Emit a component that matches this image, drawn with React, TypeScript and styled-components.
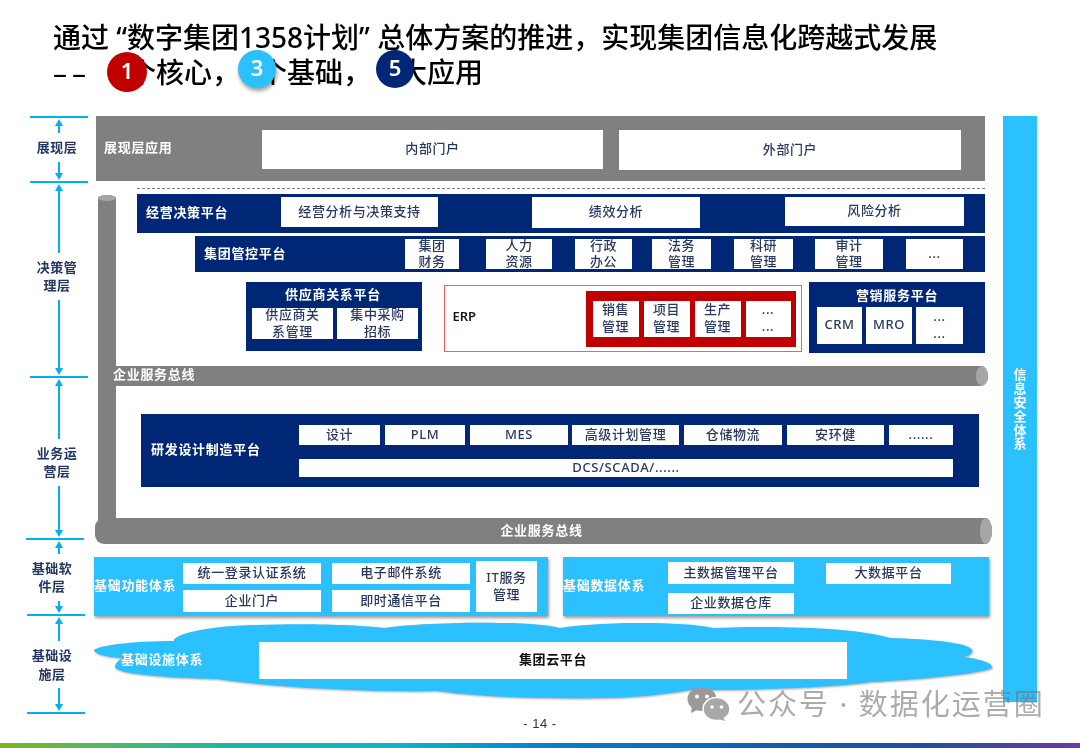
import React from "react";
import styled, { createGlobalStyle } from "styled-components";

const NAVY = "#002776";
const SKY = "#2bc0ff";
const GRAY = "#808080";
const RED = "#c00000";
const RULE = "#00b0f0";
const INK = "#28385e";

const Global = createGlobalStyle`
  html, body { margin: 0; padding: 0; background: #fff; }
  body { font-family: "Noto Sans", "Noto Sans CJK SC", sans-serif; }
`;

const Slide = styled.div`
  position: relative;
  width: 1080px;
  height: 748px;
  overflow: hidden;
  background: #fff;
  display: flex;
  flex-direction: column;
  filter: blur(0.35px);
`;

const Title = styled.h1`
  margin: 0;
  padding: 20px 0 0 53px;
  font-size: 28px;
  line-height: 35px;
  font-weight: 500;
  color: #000;
  font-family: "Noto Sans", "Noto Sans CJK SC", sans-serif;
  white-space: nowrap;
`;

const TitleLine = styled.div`
  position: relative;
  height: 35px;
  display: flex;
`;

const TitleDash = styled.span`
  flex: none;
  width: 75px;
  letter-spacing: 5px;
  font-weight: 400;
`;

const TitleGap = styled.span<{ $w: number }>`
  flex: none;
  display: inline-block;
  width: ${(p) => p.$w}px;
`;

const Badge = styled.span<{ $left: number; $top: number; $size: number; $bg: string; $shadow?: boolean }>`
  position: absolute;
  left: ${(p) => p.$left}px;
  top: ${(p) => p.$top}px;
  width: ${(p) => p.$size}px;
  height: ${(p) => p.$size}px;
  border-radius: 50%;
  background: ${(p) => p.$bg};
  color: #fff;
  font-size: 22px;
  font-weight: 600;
  line-height: ${(p) => p.$size - 3}px;
  text-align: center;
  box-shadow: ${(p) => (p.$shadow ? "1px 3px 4px rgba(0,0,0,.4)" : "none")};
`;

const Body = styled.div`
  display: flex;
  margin-top: 26px;
  height: 596px;
`;

const Ruler = styled.div`
  width: 94px;
  flex: none;
  display: flex;
  flex-direction: column;
  padding-left: 30px;
  box-sizing: border-box;
`;

const Tick = styled.div<{ $shift?: number }>`
  width: 58px;
  height: 1.6px;
  background: ${RULE};
  margin-left: ${(p) => p.$shift ?? 0}px;
  flex: none;
`;

const RulerSection = styled.div<{ $h: number }>`
  width: 58px;
  height: ${(p) => p.$h}px;
  flex: none;
  display: flex;
  flex-direction: column;
  align-items: center;
`;

const Stem = styled.div<{ $dir: "up" | "down"; $grow?: number }>`
  position: relative;
  flex: ${(p) => p.$grow ?? 1} 1 0;
  width: 1.5px;
  background: ${RULE};
  margin: ${(p) => (p.$dir === "up" ? "3px 0 0" : "0 0 3px")};
  &::after {
    content: "";
    position: absolute;
    left: -3.2px;
    ${(p) => (p.$dir === "up" ? "top: -2px;" : "bottom: -2px;")}
    border-left: 4px solid transparent;
    border-right: 4px solid transparent;
    ${(p) =>
      p.$dir === "up" ? `border-bottom: 7px solid ${RULE};` : `border-top: 7px solid ${RULE};`}
  }
`;

const RulerLabel = styled.div<{ $x?: number }>`
  flex: none;
  width: 44px;
  margin: 5px 0 5px ${(p) => p.$x ?? -4}px;
  font-size: 13px;
  letter-spacing: 0.5px;
  line-height: 18.5px;
  font-weight: 700;
  color: #22365f;
  text-align: center;
  white-space: nowrap;
`;

const Main = styled.div`
  position: relative;
  width: 898px;
  flex: none;
  display: flex;
  flex-direction: column;
`;

const Pipe = styled.div`
  position: absolute;
  left: 4px;
  top: 79px;
  width: 18px;
  height: 330px;
  background: ${GRAY};
  border-radius: 9px 9px 0 0 / 3px 3px 0 0;
  &::before {
    content: "";
    position: absolute;
    inset: 0 0 auto 0;
    height: 6px;
    border-radius: 50%;
    background: #a6a6a6;
  }
`;

const Band = styled.div<{ $bg: string; $ml: number; $mt?: number; $w: number; $h: number; $pt?: number; $pl?: number }>`
  flex: none;
  box-sizing: border-box;
  display: flex;
  align-items: flex-start;
  margin-left: ${(p) => p.$ml}px;
  margin-top: ${(p) => p.$mt ?? 0}px;
  width: ${(p) => p.$w}px;
  height: ${(p) => p.$h}px;
  padding: ${(p) => p.$pt ?? 0}px 0 0 ${(p) => p.$pl ?? 0}px;
  background: ${(p) => p.$bg};
`;

const BandLabel = styled.div<{ $w: number; $self?: number }>`
  flex: none;
  width: ${(p) => p.$w}px;
  align-self: center;
  margin-top: ${(p) => p.$self ?? 0}px;
  font-size: 13px;
  letter-spacing: 0.7px;
  font-weight: 700;
  color: #fff;
  white-space: nowrap;
`;

const Cell = styled.div<{ $w: number; $h: number; $ml?: number; $mt?: number; $strong?: boolean; $dark?: boolean }>`
  flex: none;
  box-sizing: border-box;
  display: flex;
  align-items: center;
  justify-content: center;
  width: ${(p) => p.$w}px;
  height: ${(p) => p.$h}px;
  margin-left: ${(p) => p.$ml ?? 0}px;
  margin-top: ${(p) => p.$mt ?? 0}px;
  padding-bottom: 2px;
  background: #fff;
  color: ${(p) => (p.$dark ? "#101010" : INK)};
  font-size: 13px;
  letter-spacing: 0.6px;
  line-height: 16.5px;
  font-weight: ${(p) => (p.$strong ? 700 : 500)};
  text-align: center;
  white-space: nowrap;
`;

const Dashes = styled.div`
  flex: none;
  margin: 7px 0 0 43px;
  width: 848px;
  height: 0;
  border-top: 1px dashed #777;
`;

const TriRow = styled.div`
  flex: none;
  display: flex;
  align-items: flex-start;
  margin: 10px 0 0 152px;
  height: 71px;
`;

const PlatformPanel = styled.div<{ $w: number; $h: number; $ml?: number; $head: number; $pl: number }>`
  flex: none;
  box-sizing: border-box;
  display: grid;
  grid-template-rows: ${(p) => p.$head}px auto;
  width: ${(p) => p.$w}px;
  height: ${(p) => p.$h}px;
  margin-left: ${(p) => p.$ml ?? 0}px;
  padding-left: ${(p) => p.$pl}px;
  background: ${NAVY};
`;

const PanelHead = styled.div<{ $pb: number }>`
  margin-left: -8px;
  padding-bottom: ${(p) => p.$pb}px;
  display: flex;
  align-items: center;
  justify-content: center;
  font-size: 13px;
  letter-spacing: 0.7px;
  font-weight: 700;
  color: #fff;
`;

const CellRow = styled.div<{ $gap?: number }>`
  display: flex;
  gap: ${(p) => p.$gap ?? 4}px;
`;

const ErpFrame = styled.div`
  flex: none;
  box-sizing: border-box;
  display: flex;
  align-items: center;
  width: 358px;
  height: 67px;
  margin: 3px 0 0 22px;
  padding: 0 5.5px 0 7.5px;
  border: 1.5px solid #ff5a5f;
  background: #fff;
`;

const ErpName = styled.div`
  flex: 1;
  margin-top: -5px;
  font-size: 13px;
  font-weight: 600;
  color: #101820;
`;

const ErpCore = styled.div`
  flex: none;
  box-sizing: border-box;
  display: flex;
  gap: 5px;
  width: 210px;
  height: 56px;
  padding: 10px 0 0 7px;
  background: ${RED};
`;

const Bus = styled.div<{ $ml: number; $mt: number; $w: number; $h: number; $center?: boolean; $pl?: number; $rl?: number; $pb: number }>`
  position: relative;
  z-index: 1;
  flex: none;
  box-sizing: border-box;
  display: flex;
  align-items: center;
  justify-content: ${(p) => (p.$center ? "center" : "flex-start")};
  margin: ${(p) => p.$mt}px 0 0 ${(p) => p.$ml}px;
  width: ${(p) => p.$w}px;
  height: ${(p) => p.$h}px;
  padding: 0 ${(p) => (p.$center ? 4 : 0)}px ${(p) => p.$pb}px ${(p) => p.$pl ?? 0}px;
  background: ${GRAY};
  border-radius: ${(p) => p.$rl ?? 0}px 7px 7px ${(p) => p.$rl ?? 0}px / ${(p) => p.$rl ?? 0}px 50% 50% ${(p) => p.$rl ?? 0}px;
  color: #fff;
  font-size: 13px;
  letter-spacing: 0.7px;
  font-weight: 700;
  &::after {
    content: "";
    position: absolute;
    right: 0;
    top: 0;
    bottom: 0;
    width: 12px;
    border-radius: 50%;
    background: #a6a6a6;
  }
`;

const RndColumn = styled.div`
  display: flex;
  flex-direction: column;
  gap: 14px;
`;

const FoundationRow = styled.div`
  flex: none;
  display: flex;
  margin-top: 13px;
`;

const FoundationPanel = styled.div<{ $w: number; $ml?: number }>`
  flex: none;
  box-sizing: border-box;
  display: flex;
  align-items: flex-start;
  width: ${(p) => p.$w}px;
  height: 59px;
  margin-left: ${(p) => p.$ml ?? 0}px;
  background: ${SKY};
  box-shadow: 1px 2px 3px rgba(0, 0, 0, 0.4);
`;

const CellColumn = styled.div<{ $ml?: number; $pt: number; $gap: number }>`
  display: flex;
  flex-direction: column;
  gap: ${(p) => p.$gap}px;
  margin-left: ${(p) => p.$ml ?? 0}px;
  padding-top: ${(p) => p.$pt}px;
`;

const CloudRow = styled.div`
  position: relative;
  flex: none;
  box-sizing: border-box;
  display: flex;
  align-items: flex-start;
  margin-top: 8px;
  height: 88px;
  padding-left: 27px;
`;

const CloudShape = styled.svg`
  position: absolute;
  inset: 0;
  width: 898px;
  height: 88px;
  overflow: visible;
  filter: drop-shadow(1px 1.5px 1px rgba(0, 0, 0, 0.35));
`;

const CloudLabel = styled(BandLabel)`
  position: relative;
  align-self: flex-start;
  margin-top: 25px;
`;

const CloudCell = styled(Cell)`
  position: relative;
`;

const SecurityBar = styled.div`
  flex: none;
  display: flex;
  align-items: center;
  justify-content: center;
  margin-left: 11px;
  width: 34px;
  height: 586px;
  background: ${SKY};
  color: #fff;
  font-size: 13px;
  font-weight: 700;
  letter-spacing: 0.8px;
  writing-mode: vertical-rl;
  text-orientation: upright;
`;

const PageNo = styled.div`
  margin-top: 5px;
  height: 14px;
  font-family: "Liberation Sans", sans-serif;
  font-size: 13px;
  line-height: 14px;
  letter-spacing: 0.5px;
  text-align: center;
  color: #333;
`;

const BottomBand = styled.div`
  position: absolute;
  left: 0;
  right: 0;
  bottom: 0;
  height: 5px;
  background: linear-gradient(
    90deg,
    #7fb51f 0%,
    #4fb86a 10%,
    #1cb5a6 22%,
    #0db2cc 37%,
    #0a7cc6 52%,
    #0f62a8 70%,
    #1f4f9e 85%,
    #6d3aa0 100%
  );
`;

const Watermark = styled.div`
  position: absolute;
  z-index: 3;
  left: 687px;
  top: 686px;
  display: flex;
  align-items: center;
  gap: 7px;
  white-space: nowrap;
  color: rgba(120, 120, 120, 0.62);
  font-size: 29px;
  line-height: 36px;
  letter-spacing: 2px;
`;

const WeChat = () => (
  <svg width="43" height="34" viewBox="0 0 43 34">
    <ellipse cx="15" cy="12" rx="14.5" ry="12" fill="#999" />
    <path d="M5 19 L4 26 L12 22 Z" fill="#999" />
    <circle cx="10" cy="9.5" r="2" fill="#fff" />
    <circle cx="20" cy="9.5" r="2" fill="#fff" />
    <ellipse cx="29.5" cy="22" rx="13.5" ry="11.5" fill="#a8a8a8" stroke="#fff" strokeWidth="1.5" />
    <path d="M36 30 L38 34 L31 32 Z" fill="#a8a8a8" />
    <circle cx="25" cy="20" r="1.8" fill="#fff" />
    <circle cx="34.5" cy="20" r="1.8" fill="#fff" />
  </svg>
);

const groupItems: Array<[string, string, number, number]> = [
  ["集团", "财务", 54, 0],
  ["人力", "资源", 66, 27],
  ["行政", "办公", 57, 23],
  ["法务", "管理", 59, 20],
  ["科研", "管理", 59, 23],
  ["审计", "管理", 68, 22],
];

const rndItems: Array<[string, number, number]> = [
  ["设计", 81, 0],
  ["PLM", 80, 5],
  ["MES", 98, 5],
  ["高级计划管理", 107, 4],
  ["仓储物流", 98, 5],
  ["安环健", 97, 5],
  ["......", 64, 5],
];

const TwoLine = ({ a, b }: { a: string; b: string }) => (
  <span>
    {a}
    <br />
    {b}
  </span>
);

export default function App() {
  return (
    <Slide>
      <Global />
      <Title>
        <TitleLine>通过 “数字集团1358计划” 总体方案的推进，实现集团信息化跨越式发展</TitleLine>
        <TitleLine>
          <TitleDash>––</TitleDash>
          个核心，
          <TitleGap $w={19} />
          个基础，
          <TitleGap $w={28} />
          大应用
          <Badge $left={54} $top={-3} $size={40} $bg={RED}>1</Badge>
          <Badge $left={185} $top={-5} $size={38} $bg={SKY} $shadow>3</Badge>
          <Badge $left={323} $top={-5} $size={38} $bg={NAVY}>5</Badge>
        </TitleLine>
      </Title>

      <Body>
        <Ruler>
          <Tick />
          <RulerSection $h={63.4}>
            <Stem $dir="up" $grow={0.8} />
            <RulerLabel>展现层</RulerLabel>
            <Stem $dir="down" />
          </RulerSection>
          <Tick />
          <RulerSection $h={193.4}>
            <Stem $dir="up" $grow={0.92} />
            <RulerLabel>决策管<br />理层</RulerLabel>
            <Stem $dir="down" />
          </RulerSection>
          <Tick />
          <RulerSection $h={160.4}>
            <Stem $dir="up" />
            <RulerLabel>业务运<br />营层</RulerLabel>
            <Stem $dir="down" $grow={0.85} />
          </RulerSection>
          <Tick $shift={-4} />
          <RulerSection $h={74.4}>
            <Stem $dir="up" />
            <RulerLabel $x={-14}>基础软<br />件层</RulerLabel>
            <Stem $dir="down" $grow={0.9} />
          </RulerSection>
          <Tick $shift={-3} />
          <RulerSection $h={96.4}>
            <Stem $dir="up" />
            <RulerLabel $x={-14}>基础设<br />施层</RulerLabel>
            <Stem $dir="down" $grow={0.89} />
          </RulerSection>
          <Tick $shift={-3} />
        </Ruler>

        <Main>
          <Pipe />

          <Band $bg={GRAY} $ml={2} $w={889} $h={65} $pt={14} $pl={8}>
            <BandLabel $w={158} $self={-18}>展现层应用</BandLabel>
            <Cell $w={341} $h={39}>内部门户</Cell>
            <Cell $w={342} $h={40} $ml={16}>外部门户</Cell>
          </Band>

          <Dashes />

          <Band $bg={NAVY} $ml={43} $mt={5} $w={848} $h={39} $pt={3} $pl={9}>
            <BandLabel $w={135} $self={-7}>经营决策平台</BandLabel>
            <Cell $w={157} $h={30}>经营分析与决策支持</Cell>
            <Cell $w={168} $h={31} $ml={94}>绩效分析</Cell>
            <Cell $w={179} $h={29} $ml={85}>风险分析</Cell>
          </Band>

          <Band $bg={NAVY} $ml={101} $mt={3} $w={790} $h={36} $pt={3} $pl={9}>
            <BandLabel $w={201} $self={-7}>集团管控平台</BandLabel>
            {groupItems.map(([a, b, w, ml]) => (
              <Cell key={a} $w={w} $h={30} $ml={ml}>
                <TwoLine a={a} b={b} />
              </Cell>
            ))}
            <Cell $w={57} $h={30} $ml={23}>...</Cell>
          </Band>

          <TriRow>
            <PlatformPanel $w={176} $h={69} $head={26} $pl={6}>
              <PanelHead $pb={4}>供应商关系平台</PanelHead>
              <CellRow>
                <Cell $w={81} $h={31}><TwoLine a="供应商关" b="系管理" /></Cell>
                <Cell $w={81} $h={31}><TwoLine a="集中采购" b="招标" /></Cell>
              </CellRow>
            </PlatformPanel>

            <ErpFrame>
              <ErpName>ERP</ErpName>
              <ErpCore>
                <Cell $w={46} $h={36}><TwoLine a="销售" b="管理" /></Cell>
                <Cell $w={46} $h={36}><TwoLine a="项目" b="管理" /></Cell>
                <Cell $w={46} $h={36}><TwoLine a="生产" b="管理" /></Cell>
                <Cell $w={45} $h={36}><TwoLine a="..." b="..." /></Cell>
              </ErpCore>
            </ErpFrame>

            <PlatformPanel $w={176} $h={71} $ml={7} $head={25} $pl={8}>
              <PanelHead $pb={0}>营销服务平台</PanelHead>
              <CellRow>
                <Cell $w={45} $h={37}>CRM</Cell>
                <Cell $w={46} $h={37}>MRO</Cell>
                <Cell $w={47} $h={37}><TwoLine a="..." b="..." /></Cell>
              </CellRow>
            </PlatformPanel>
          </TriRow>

          <Bus $ml={5} $mt={13} $w={889} $h={20} $pl={14} $pb={5}>企业服务总线</Bus>

          <Band $bg={NAVY} $ml={47} $mt={28} $w={838} $h={73} $pt={11} $pl={10}>
            <BandLabel $w={148} $self={-15}>研发设计制造平台</BandLabel>
            <RndColumn>
              <CellRow $gap={0}>
                {rndItems.map(([t, w, ml]) => (
                  <Cell key={t} $w={w} $h={20} $ml={ml}>{t}</Cell>
                ))}
              </CellRow>
              <Cell $w={654} $h={18}>DCS/SCADA/......</Cell>
            </RndColumn>
          </Band>

          <Bus $ml={1} $mt={31} $w={897} $h={26} $center $rl={9} $pb={4}>企业服务总线</Bus>

          <FoundationRow>
            <FoundationPanel $w={454}>
              <BandLabel $w={89} $self={-5}>基础功能体系</BandLabel>
              <CellColumn $pt={6} $gap={6}>
                <Cell $w={138} $h={21}>统一登录认证系统</Cell>
                <Cell $w={138} $h={22}>企业门户</Cell>
              </CellColumn>
              <CellColumn $ml={11} $pt={6} $gap={6}>
                <Cell $w={138} $h={21}>电子邮件系统</Cell>
                <Cell $w={138} $h={22}>即时通信平台</Cell>
              </CellColumn>
              <Cell $w={61} $h={51} $ml={6} $mt={4}><TwoLine a="IT服务" b="管理" /></Cell>
            </FoundationPanel>
            <FoundationPanel $w={426} $ml={15}>
              <BandLabel $w={105} $self={-5}>基础数据体系</BandLabel>
              <CellColumn $pt={5} $gap={9}>
                <Cell $w={126} $h={22}>主数据管理平台</Cell>
                <Cell $w={126} $h={21}>企业数据仓库</Cell>
              </CellColumn>
              <Cell $w={125} $h={21} $ml={32} $mt={6}>大数据平台</Cell>
            </FoundationPanel>
          </FoundationRow>

          <CloudRow>
            <CloudShape viewBox="94 624 898 88">
              <path
                fill={SKY}
                d="M94 650 C100 645 135 641 174 641 C172 636 200 626 257 625 C310 623 360 625 385 628 C410 623 520 619 560 628 C600 622 680 621 713 628 C780 625 860 628 890 638 C930 639 970 643 972 650 C972 654 968 656 963 657 C980 659 992 663 992 667 C992 672 930 679 870 682 C830 688 750 690 690 690 C660 695 630 698 600 698 C540 699 480 697 437 691 C370 692 280 688 217 679 C170 678 115 674 115 667 C115 664 118 660 123 658 C105 657 94 654 94 650 Z"
              />
            </CloudShape>
            <CloudLabel $w={138}>基础设施体系</CloudLabel>
            <CloudCell $w={588} $h={37} $mt={18} $strong $dark>集团云平台</CloudCell>
          </CloudRow>
        </Main>

        <SecurityBar>信息安全体系</SecurityBar>
      </Body>

      <PageNo>- 14 -</PageNo>
      <BottomBand />

      <Watermark>
        <WeChat />
        公众号 · 数据化运营圈
      </Watermark>
    </Slide>
  );
}
